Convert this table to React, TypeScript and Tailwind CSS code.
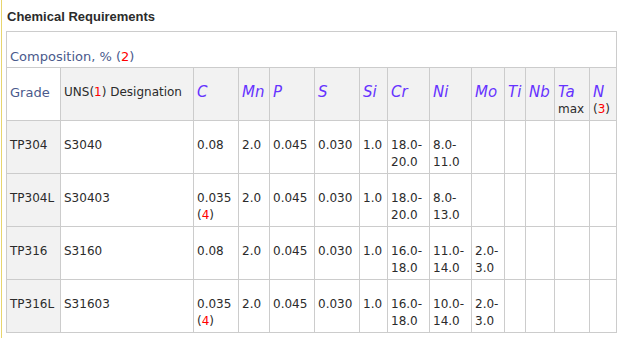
import React from "react";

const font = { fontFamily: '"DejaVu Sans", Verdana, sans-serif' };

const cell =
  "border border-[#cccccc] px-[3px] pt-[16px] pb-[2px] align-top text-left leading-[17px]";
const el = "italic font-normal text-[15px] text-[#6633ff]";

const Red = ({ n }: { n: string }) => (
  <>
    (<span className="text-[#ff0000]">{n}</span>)
  </>
);

type Row = {
  grade: string;
  uns: string;
  c: string[];
  cr: string[];
  ni: string[];
  mo?: string[];
};

const rows: Row[] = [
  { grade: "TP304", uns: "S3040", c: ["0.08"], cr: ["18.0-", "20.0"], ni: ["8.0-", "11.0"] },
  { grade: "TP304L", uns: "S30403", c: ["0.035", "4"], cr: ["18.0-", "20.0"], ni: ["8.0-", "13.0"] },
  { grade: "TP316", uns: "S3160", c: ["0.08"], cr: ["16.0-", "18.0"], ni: ["11.0-", "14.0"], mo: ["2.0-", "3.0"] },
  { grade: "TP316L", uns: "S31603", c: ["0.035", "4"], cr: ["16.0-", "18.0"], ni: ["10.0-", "14.0"], mo: ["2.0-", "3.0"] },
];

const widths = [54, 133, 45, 31, 45, 45, 28, 42, 42, 33, 21, 29, 35, 27];

const Two = ({ v }: { v?: string[] }) =>
  v ? (
    <>
      <div>{v[0]}</div>
      <div>{v[1]}</div>
    </>
  ) : null;

export default function App() {
  return (
    <div className="w-[644px] h-[338px] bg-white pl-px overflow-hidden" style={font}>
      <div className="h-full border-l border-[#e8d56e] pl-[4px]">
        <h1
          className="pl-[1px] pt-[9px] h-[31px] text-[13px] leading-[16px] font-bold text-[#2b2b2b]"
          style={{ fontFamily: '"Liberation Sans", Arial, sans-serif' }}
        >
          Chemical Requirements
        </h1>
        <table className="table-fixed border-collapse w-[611px] text-[12px] text-[#2b2b2b]">
          <colgroup>
            {widths.map((w, i) => (
              <col key={i} style={{ width: w }} />
            ))}
          </colgroup>
          <tbody>
            <tr>
              <td colSpan={14} className={`${cell} text-[13px] text-[#4a5a8c]`}>
                Composition, % <Red n="2" />
              </td>
            </tr>
            <tr>
              <th className={`${cell} font-normal text-[13px] text-[#4a5a8c]`}>Grade</th>
              <th className={`${cell} font-normal bg-[#f2f2f2] whitespace-nowrap`}>
                UNS(<span className="text-[#ff0000]">1</span>) Designation
              </th>
              {["C", "Mn", "P", "S", "Si", "Cr", "Ni", "Mo", "Ti", "Nb"].map((s) => (
                <th key={s} className={`${cell} bg-[#f2f2f2] ${el}`}>
                  {s}
                </th>
              ))}
              <th className={`${cell} bg-[#f2f2f2] font-normal`}>
                <div className={el}>Ta</div>
                <div>max</div>
              </th>
              <th className={`${cell} bg-[#f2f2f2] font-normal`}>
                <div className={el}>N</div>
                <div>
                  <Red n="3" />
                </div>
              </th>
            </tr>
            {rows.map((r) => (
              <tr key={r.grade}>
                <th className={`${cell} font-normal bg-[#f2f2f2] whitespace-nowrap`}>{r.grade}</th>
                <td className={cell}>{r.uns}</td>
                <td className={`${cell} whitespace-nowrap`}>
                  <div>{r.c[0]}</div>
                  {r.c[1] && (
                    <div>
                      <Red n={r.c[1]} />
                    </div>
                  )}
                </td>
                <td className={cell}>2.0</td>
                <td className={cell}>0.045</td>
                <td className={cell}>0.030</td>
                <td className={cell}>1.0</td>
                <td className={`${cell} whitespace-nowrap`}>
                  <Two v={r.cr} />
                </td>
                <td className={`${cell} whitespace-nowrap`}>
                  <Two v={r.ni} />
                </td>
                <td className={`${cell} whitespace-nowrap`}>
                  <Two v={r.mo} />
                </td>
                <td className={cell} />
                <td className={cell} />
                <td className={cell} />
                <td className={cell} />
              </tr>
            ))}
          </tbody>
        </table>
      </div>
    </div>
  );
}
